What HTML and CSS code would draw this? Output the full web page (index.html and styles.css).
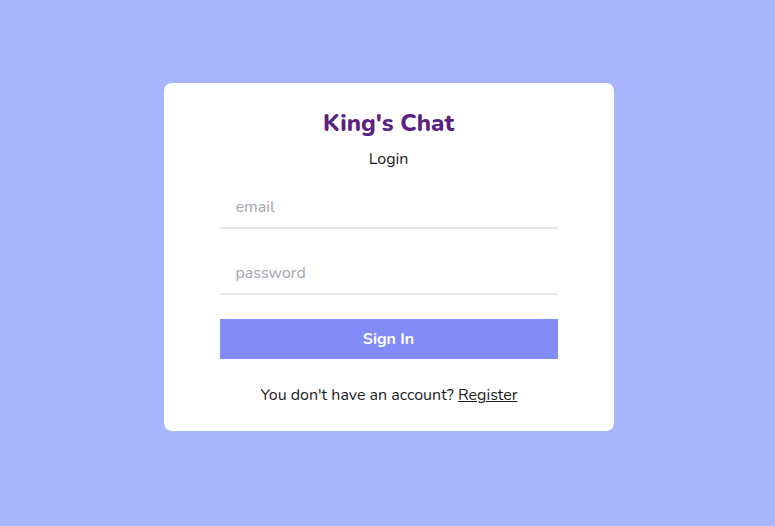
FILE: index.html
```html
<!DOCTYPE html>
<html>
<head>
<meta charset="utf-8">
<link rel="stylesheet" href="styles.css">
</head>
<body>
<div class="page">
  <div class="card">
    <h1 class="logo">King's Chat</h1>
    <div class="subtitle">Login</div>
    <form class="form">
      <input class="field" type="email" placeholder="email">
      <input class="field" type="password" placeholder="password">
      <button class="btn" type="button">Sign In</button>
    </form>
    <p class="footer">You don't have an account? <a href="#" class="link">Register</a></p>
  </div>
</div>
</body>
</html>
```
FILE: styles.css
```css
* { box-sizing: border-box; }
html, body { margin: 0; padding: 0; }
body {
  background: #a7b5fe;
  font-family: "Nunito", "Lato", "Open Sans", sans-serif;
  color: #1c1c1c;
}
.page {
  height: 526px;
  display: flex;
  justify-content: center;
  padding: 83px 0 0 2px;
}
.card {
  width: 450px;
  height: 348px;
  background: #fff;
  border-radius: 8px;
  padding: 20px 56px 0;
  display: flex;
  flex-direction: column;
  align-items: stretch;
  text-align: center;
}
.logo {
  margin: 0;
  font-size: 24px;
  line-height: 32px;
  font-weight: 800;
  color: #5a2181;
  padding-top: 4px;
}
.subtitle {
  font-size: 16px;
  line-height: 20px;
  margin-top: 10px;
}
.form {
  display: flex;
  flex-direction: column;
  margin-top: 18px;
}
.field {
  border: none;
  border-bottom: 2px solid #e6e6ea;
  height: 42px;
  padding: 0 16px;
  font-family: inherit;
  font-size: 16px;
  color: #333;
  outline: none;
  margin-bottom: 24px;
}
.field::placeholder { color: #a3a3ad; }
.btn {
  margin-top: 0;
  height: 40px;
  border: none;
  background: #828bf8;
  color: #fff;
  font-family: inherit;
  font-size: 16px;
  font-weight: 700;
}
.footer {
  margin: 26px 0 0;
  padding-left: 1px;
  font-size: 16px;
  line-height: 20px;
}
.link { color: #1c1c1c; }
```
